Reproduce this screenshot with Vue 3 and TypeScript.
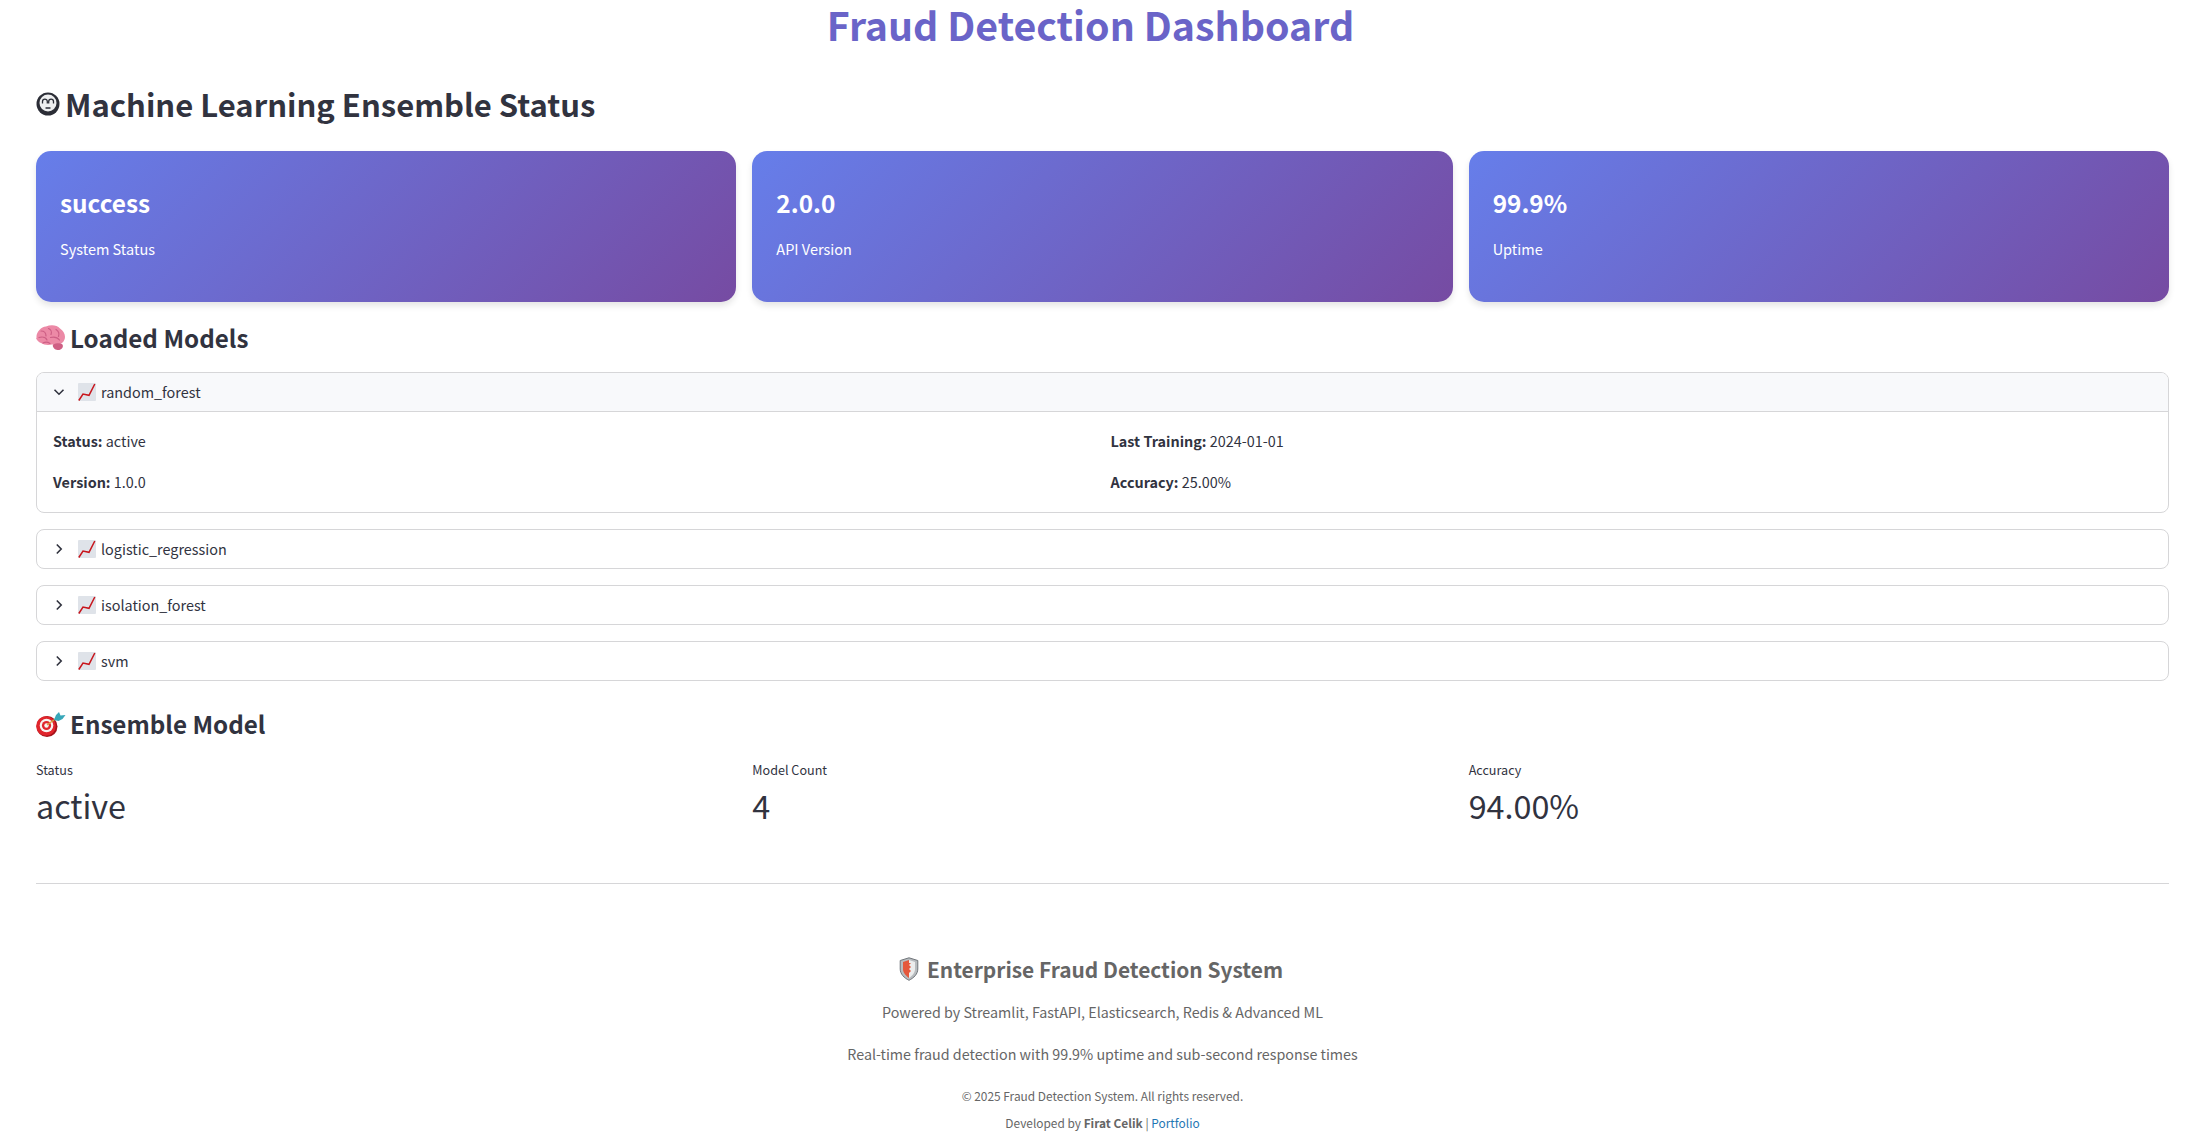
<script setup lang="ts">
const cards = [
  { value: "success", label: "System Status" },
  { value: "2.0.0", label: "API Version" },
  { value: "99.9%", label: "Uptime" },
];

const closedModels = ["logistic_regression", "isolation_forest", "svm"];

const metrics = [
  { label: "Status", value: "active" },
  { label: "Model Count", value: "4" },
  { label: "Accuracy", value: "94.00%" },
];
</script>

<template>
  <div class="page">
    <h1 class="title">Fraud Detection Dashboard</h1>

    <h2 class="section-title">
      <svg class="robot" viewBox="0 0 24 24" aria-hidden="true">
        <circle cx="12" cy="12" r="11.500" fill="#2b2d36" />
        <circle cx="12" cy="11" r="8.500" fill="#eeeff0" />
        <path d="M6.500 11.500V9.500a2.400 2.400 0 0 1 4.800 0v2M12.700 11.500V9.500a2.400 2.400 0 0 1 4.800 0v2" fill="none" stroke="#2b2d36" stroke-width="1.300" />
        <path d="M10 16h4" fill="none" stroke="#2b2d36" stroke-width="1.400" stroke-linecap="round" />
      </svg>
      <span>Machine Learning Ensemble Status</span>
    </h2>

    <div class="cards">
      <div v-for="card in cards" :key="card.label" class="card">
        <div class="card-value">{{ card.value }}</div>
        <div class="card-label">{{ card.label }}</div>
      </div>
    </div>

    <h3 class="sub-title loaded">
      <svg class="emoji" viewBox="0 0 30 26" aria-hidden="true">
        <path d="M0.500 13C0 7 5 2 10 1.500c5-2 11-1.500 14 2 4 2.500 6 7 4.500 11-1 3-3.500 4.500-6.500 4.500-2 .5-3.500 .5-6 .5-4 1-8 .5-11-1.500-2.500-1-4-2.500-5-5z" fill="#ec89a6" />
        <path d="M17 19.500c3-1.500 8-2 9.500 0 1.500 3-1.500 6-5 5.500-2.500 0-5.500-3-4.500-5.500z" fill="#cf5f84" />
        <path d="M5 6c3 0 5 2 5 5M12.500 3.500c2.500 1 3.500 3.500 2.500 6M20 4.500c2.500 1.500 3.500 4 2.500 7M3 12.500c3.500-1 7 0 8 2.500M14.500 12.500c3.500-1 7 0 9 2.500M7 18c2-1 5-1 7 .5" fill="none" stroke="#cd5f85" stroke-width="1.200" stroke-linecap="round" />
      </svg>
      <span>Loaded Models</span>
    </h3>

    <div class="expander">
      <div class="expander-head open">
        <svg class="chevron" viewBox="0 0 12 12" aria-hidden="true"><path d="M1.500 3.800 6 8.200l4.500-4.400" /></svg>
        <svg class="chart" viewBox="0 0 18 18" aria-hidden="true">
          <rect width="18" height="18" rx="1" fill="#dfe3e9" />
          <path d="M0.800 17.500 5 11l6 1.300L16.800 1" fill="none" stroke="#c8161d" stroke-width="1.500" />
        </svg>
        <span>random_forest</span>
      </div>
      <div class="expander-body">
        <div class="detail-col">
          <p><strong>Status:</strong> active</p>
          <p><strong>Version:</strong> 1.0.0</p>
        </div>
        <div class="detail-col">
          <p><strong>Last Training:</strong> 2024-01-01</p>
          <p><strong>Accuracy:</strong> 25.00%</p>
        </div>
      </div>
    </div>

    <div v-for="name in closedModels" :key="name" class="expander">
      <div class="expander-head">
        <svg class="chevron" viewBox="0 0 12 12" aria-hidden="true"><path d="M3.800 1.500 8.200 6l-4.400 4.500" /></svg>
        <svg class="chart" viewBox="0 0 18 18" aria-hidden="true">
          <rect width="18" height="18" rx="1" fill="#dfe3e9" />
          <path d="M0.800 17.500 5 11l6 1.300L16.800 1" fill="none" stroke="#c8161d" stroke-width="1.500" />
        </svg>
        <span>{{ name }}</span>
      </div>
    </div>

    <h3 class="sub-title ensemble">
      <svg class="emoji" viewBox="0 0 30 26" aria-hidden="true">
        <circle cx="11" cy="15.500" r="10.500" fill="#a5121a" />
        <circle cx="10" cy="15" r="9.800" fill="#e0252c" />
        <circle cx="10.500" cy="14.500" r="6.800" fill="#f8f3f1" />
        <circle cx="10.500" cy="14.500" r="4.600" fill="#e0252c" />
        <circle cx="10.500" cy="14.500" r="2.200" fill="#f8f3f1" />
        <path d="M11 14 22 6" stroke="#d9a441" stroke-width="1.300" />
        <path d="M18 9l2-5 3-3 1.500 3.500 5-.5-3 4-4 2z" fill="#37a7b9" />
      </svg>
      <span>Ensemble Model</span>
    </h3>

    <div class="metrics">
      <div v-for="metric in metrics" :key="metric.label" class="metric">
        <div class="metric-label">{{ metric.label }}</div>
        <div class="metric-value">{{ metric.value }}</div>
      </div>
    </div>

    <hr class="rule" />

    <footer class="footer">
      <h4 class="footer-title">
        <svg class="shield" viewBox="0 0 20 24" aria-hidden="true">
          <path d="M10 .8 18.800 3.500V12c0 5-4 9-8.800 11.300C5.200 21 1.200 17 1.200 12V3.500z" fill="#b8bcbf" stroke="#70757a" />
          <path d="M10 3 4 5v7c0 4 3 7 6 9z" fill="#e4583c" />
          <path d="M10 3v18c3-2 6-5 6-9V5z" fill="#eceded" />
          <path d="M10 6h2l-2 2 2 2-2 2 2 2-2 2z" fill="#e4583c" />
        </svg>
        <span>Enterprise Fraud Detection System</span>
      </h4>
      <p class="footer-line first">Powered by Streamlit, FastAPI, Elasticsearch, Redis &amp; Advanced ML</p>
      <p class="footer-line">Real-time fraud detection with 99.9% uptime and sub-second response times</p>
      <p class="footer-small copyright">© 2025 Fraud Detection System. All rights reserved.</p>
      <p class="footer-small">Developed by <strong>Firat Celik</strong> | <a href="#" class="link">Portfolio</a></p>
    </footer>
  </div>
</template>

<style>
body {
  background: #fff;
}
</style>

<style scoped>
.page {
  box-sizing: border-box;
  width: 2188px;
  height: 1145px;
  overflow: hidden;
  padding: 0 19px 0 36px;
  font-family: "Noto Sans CJK SC", "Noto Sans", sans-serif;
  color: #31333f;
}

.title {
  margin: 0;
  padding-right: 24px;
  height: 48px;
  font-size: 39.3px;
  line-height: 48px;
  font-weight: 700;
  text-align: center;
  color: #6a64c8;
}

.section-title {
  display: flex;
  align-items: center;
  gap: 5px;
  margin: 31px 0 0;
  height: 50px;
  font-size: 31px;
  line-height: 50px;
  font-weight: 600;
}

.robot {
  width: 24px;
  height: 24px;
}

.cards {
  display: grid;
  grid-template-columns: repeat(3, 1fr);
  gap: 16px;
  margin-top: 22px;
}

.card {
  height: 151px;
  box-sizing: border-box;
  padding: 34px 24px 0;
  border-radius: 15px;
  background: linear-gradient(135deg, #667eea 0%, #764ba2 100%);
  box-shadow: 0 4px 6px rgba(0, 0, 0, 0.1);
  color: #fff;
}

.card-value {
  font-size: 24.4px;
  line-height: 36px;
  font-weight: 600;
}

.card-label {
  margin-top: 16px;
  font-size: 14.5px;
  line-height: 24px;
}

.sub-title {
  display: flex;
  align-items: center;
  gap: 4px;
  margin: 0;
  height: 40px;
  font-size: 24.2px;
  line-height: 40px;
  font-weight: 600;
}

.sub-title.loaded {
  margin-top: 16px;
}

.sub-title.ensemble {
  margin-top: 23px;
}

.emoji {
  width: 30px;
  height: 26px;
}

.expander {
  margin-top: 16px;
  border: 1px solid #d6d6d8;
  border-radius: 8px;
  overflow: hidden;
  font-size: 14.4px;
}

.sub-title + .expander {
  margin-top: 14px;
}

.expander-head {
  display: flex;
  align-items: center;
  height: 38px;
  padding: 0 16px;
  line-height: 24px;
}

.expander-head.open {
  background: #f8f9fb;
  border-bottom: 1px solid #d6d6d8;
}

.chevron {
  width: 12px;
  height: 12px;
  margin-right: 13px;
}

.chevron path {
  fill: none;
  stroke: #31333f;
  stroke-width: 1.6;
}

.chart {
  width: 18px;
  height: 18px;
  margin-right: 5px;
}

.expander-body {
  display: grid;
  grid-template-columns: 1fr 1fr;
  gap: 16px;
  padding: 17px 16px 0;
  height: 100px;
  box-sizing: border-box;
}

.detail-col p {
  margin: 0 0 17px;
  line-height: 24px;
}

.detail-col strong {
  font-weight: 600;
}

.metrics {
  display: grid;
  grid-template-columns: repeat(3, 1fr);
  gap: 16px;
  margin-top: 16px;
}

.metric-label {
  font-size: 12.6px;
  line-height: 20px;
}

.metric-value {
  margin-top: 1px;
  font-size: 32.3px;
  line-height: 48px;
}

.rule {
  margin: 54px 0 0;
  border: 0;
  border-top: 1px solid #d6d6d8;
}

.footer {
  margin-top: 68px;
  text-align: center;
  color: #666;
}

.footer-title {
  display: flex;
  align-items: center;
  justify-content: center;
  gap: 8px;
  margin: 0;
  padding-right: 23px;
  height: 34px;
  font-size: 20.9px;
  line-height: 34px;
  font-weight: 600;
}

.shield {
  width: 20px;
  height: 24px;
  margin-top: -1px;
}

.footer-line {
  margin: 12px 0 0;
  font-size: 14.3px;
  line-height: 30px;
}

.footer-line.first {
  margin-top: 11px;
}

.footer-small {
  margin: 0;
  font-size: 11.9px;
  line-height: 27px;
}

.footer-small.copyright {
  margin-top: 13px;
}

.footer-small strong {
  font-weight: 600;
}

.link {
  color: #1f77b4;
  text-decoration: none;
}
</style>
